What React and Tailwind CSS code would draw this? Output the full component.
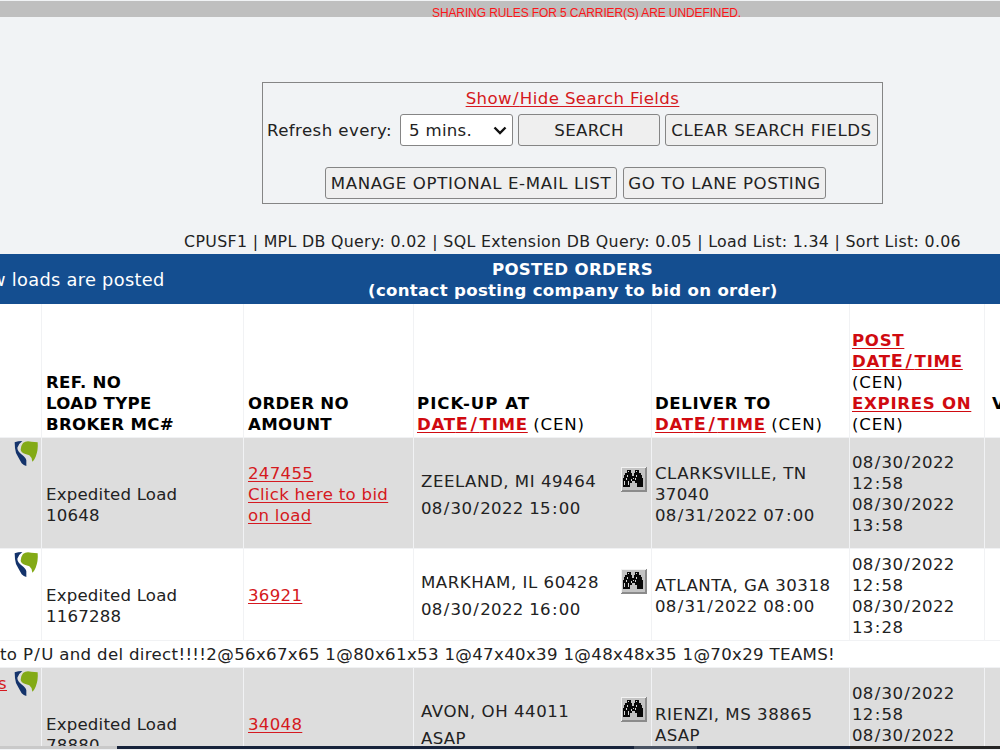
import React from 'react'

const loads = [
  {
    id: '10648',
    height: 'h-[111px]',
    shade: 'bg-[#dddddd]',
    ref: { pad: 'pt-[46px]', lines: ['Expedited Load', '10648'] },
    order: { pad: 'pt-[25px]', lines: ['247455', 'Click here to bid', 'on load'] },
    pickup: { pad: 'pt-[33px]', lines: ['ZEELAND, MI 49464', '08/30/2022 15:00'] },
    icon: 'mt-[29px]',
    deliver: { pad: 'pt-[25px]', lines: ['CLARKSVILLE, TN', '37040', '08/31/2022 07:00'] },
    post: { pad: 'pt-[14px]', lines: ['08/30/2022', '12:58', '08/30/2022', '13:58'] },
  },
  {
    id: '1167288',
    height: 'h-[92px]',
    shade: 'bg-white',
    ref: { pad: 'pt-[36px]', lines: ['Expedited Load', '1167288'] },
    order: { pad: 'pt-[36px]', lines: ['36921'] },
    pickup: { pad: 'pt-[23px]', lines: ['MARKHAM, IL 60428', '08/30/2022 16:00'] },
    icon: 'mt-[20px]',
    deliver: { pad: 'pt-[26px]', lines: ['ATLANTA, GA 30318', '08/31/2022 08:00'] },
    post: { pad: 'pt-[5px]', lines: ['08/30/2022', '12:58', '08/30/2022', '13:28'] },
    note: 'to P/U and del direct!!!!2@56x67x65 1@80x61x53 1@47x40x39 1@48x48x35 1@70x29 TEAMS!',
  },
  {
    id: '78880',
    height: 'h-[79px]',
    shade: 'bg-[#dddddd]',
    tail: 's',
    ref: { pad: 'pt-[46px]', lines: ['Expedited Load', '78880'] },
    order: { pad: 'pt-[46px]', lines: ['34048'] },
    pickup: { pad: 'pt-[33px]', lines: ['AVON, OH 44011', 'ASAP'] },
    icon: 'mt-[29px]',
    deliver: { pad: 'pt-[36px]', lines: ['RIENZI, MS 38865', 'ASAP'] },
    post: { pad: 'pt-[15px]', lines: ['08/30/2022', '12:58', '08/30/2022'] },
  },
]

const columns = 'grid grid-cols-[41px_202px_170px_238px_198px_135px_16px]'

// Slashes and colons get a little more room on both sides
const Spaced = ({ text, wide = 'tracking-[1.3px]' }) =>
  text.split(/(.[/:])/).map((part, i) => (i % 2 ? <span key={i} className={wide}>{part}</span> : part))

const Lines = ({ lines }) =>
  lines.map((line, i) => (
    <div key={i} className={line.includes(',') ? 'tracking-[0.53px]' : ''}>
      <Spaced text={line} />
    </div>
  ))

const Button = ({ children, className }) => (
  <button
    className={`h-8 shrink-0 whitespace-nowrap rounded-[3px] border border-[#858585] bg-[#efefef] text-center ${className}`}
  >
    {children}
  </button>
)

const SortLink = ({ children }) => (
  <a className="font-bold tracking-[0.7px] text-[#d00a10] underline decoration-1 underline-offset-2">
    <Spaced text={children} wide="text-[17.6px] tracking-[2.7px]" />
  </a>
)

const Zone = () => <span className="tracking-[0.8px]">(CEN)</span>

const Shield = () => (
  <svg className="h-[27px] w-[25px] shrink-0" viewBox="42 30 75 81">
    <path d="M44 37Q54 33 67 33Q54 43 52 53Q52 64 66 74Q78 83 79 91L79 108Q71 106 65 100Q56 84 48 69Q44 55 44 37Z" fill="#14336b" />
    <path d="M69 39Q78 31 94 35L113 37Q115 61 107 80Q103 90 97 95Q96 82 88 76L76 72Q63 67 62 59Q61 50 69 39Z" fill="#83aa16" />
  </svg>
)

const Binoculars = () => (
  <svg className="h-[25px] w-[26px]" viewBox="0 0 26 25" shapeRendering="crispEdges">
    <path d="M0 0H26V25H0Z" fill="#8b8b8b" />
    <path d="M0 0H25V1H1V24H0Z" fill="#f2f2f2" />
    <path d="M1 1H24V23H1Z" fill="#c3c3c3" />
    <path
      d="M6 3H10V6H11V9H13V6H14V3H18V6H20V8H21V11H22V20H16V16H14V14H11V16H9V20H2V11H3V8H4V6H6Z"
      fill="#080808"
    />
    <path d="M7 4H8V5H7ZM15 4H16V5H15ZM6 8H7V10H6ZM5 11H6V13H5ZM3 14H4V18H3ZM12 11H13V12H12ZM10 12H11V14H10ZM15 8H16V10H15ZM14 11H15V13H14ZM7 14H8V18H7Z" fill="#d6d6d6" />
  </svg>
)

const Cell = ({ cell, className = 'pl-[3px]' }) => (
  <div className={`border-l border-[#f1f2f4] ${cell.pad} ${className}`}>
    <Lines lines={cell.lines} />
  </div>
)

const LoadRow = ({ load }) => (
  <>
    <div className={`${columns} ${load.height} ${load.shade} overflow-hidden border-t border-[#f1f2f4]`}>
      <div className="flex justify-end pr-[2px] pt-[2px]">
        {load.tail && <a className="mr-[7px] mt-[3px] text-[#d51920] underline">{load.tail}</a>}
        <Shield />
      </div>
      <Cell cell={load.ref} className="pl-[4px] tracking-[0.2px]" />
      <div className={`border-l border-[#f1f2f4] pl-1 text-[#d51920] underline decoration-1 underline-offset-2 ${load.order.pad}`}>
        <Lines lines={load.order.lines} />
      </div>
      <div className="flex justify-between border-l border-[#f1f2f4] pl-[7px] pr-1">
        <div className={`leading-[27px] ${load.pickup.pad} -mt-[3px]`}>
          <Lines lines={load.pickup.lines} />
        </div>
        <div className={load.icon}>
          <Binoculars />
        </div>
      </div>
      <Cell cell={load.deliver} />
      <Cell cell={load.post} className="pl-[2px]" />
      <div className="border-l border-[#f1f2f4]" />
    </div>
    {load.note && (
      <div className="h-[27px] border-t border-[#f1f2f4] bg-white pt-[2.5px] tracking-[0.33px]">
        <Spaced text={load.note} />
      </div>
    )}
  </>
)

const App = () => {
  return (
    <div className="flex h-[750px] w-[1000px] flex-col overflow-hidden whitespace-nowrap bg-[#f1f3f5] font-['DejaVu_Sans',sans-serif] text-[16.6px] leading-[21px] tracking-[0.3px] text-[#222]">
      <div className="mt-px h-4 shrink-0 bg-[#bfbfbf] pl-[432px] pt-[4px] font-['Liberation_Sans',sans-serif] text-[12px] leading-4 tracking-[-0.11px] text-[#fb1518]">
        SHARING RULES FOR 5 CARRIER(S) ARE UNDEFINED.
      </div>

      {/* Search panel */}
      <div className="ml-[262px] mt-[65px] h-[122px] w-[621px] shrink-0 border border-[#858585] pt-[5px]">
        <div className="text-center tracking-[0.4px] text-[#d51920]">
          <a className="underline decoration-1 underline-offset-2">
            <Spaced text="Show/Hide Search Fields" />
          </a>
        </div>
        <div className="mt-[5px] flex items-center pl-1">
          <span className="w-[133px] shrink-0 tracking-[0.42px]">Refresh every:</span>
          <div className="mr-[5px] flex h-8 w-[113px] shrink-0 items-center justify-between rounded-[3px] border border-[#858585] bg-white pl-2 pr-[5px]">
            5 mins.
            <svg className="h-[9px] w-[14px]" viewBox="0 0 14 9">
              <path d="M1.5 1.5L7 7L12.5 1.5" fill="none" stroke="#111" strokeWidth="2.4" />
            </svg>
          </div>
          <Button className="mr-[5px] w-[142px] tracking-[0.4px]">SEARCH</Button>
          <Button className="w-[213px] tracking-[0.58px]">CLEAR SEARCH FIELDS</Button>
        </div>
        <div className="mt-[21px] flex gap-[6px] pl-[62px]">
          <Button className="w-[292px] tracking-[0.63px]">MANAGE OPTIONAL E-MAIL LIST</Button>
          <Button className="w-[203px] tracking-[0.53px]">GO TO LANE POSTING</Button>
        </div>
      </div>

      <div className="mt-[27px] h-[23px] shrink-0 pr-[39px] text-right text-[15.8px] tracking-[0.33px]">
        CPUSF1 | MPL DB Query: 0.02 | SQL Extension DB Query: 0.05 | Load List: 1.34 | Sort List: 0.06
      </div>

      {/* Section title */}
      <div className="flex h-[50px] shrink-0 items-center bg-[#144e90] text-white">
        <div className="flex w-[368px] justify-start text-[17.8px]">
          <span className="-ml-[9px] mt-[1px]">w loads are posted</span>
        </div>
        <div className="w-[409px] pt-[2px] text-center font-bold">
          <div>POSTED ORDERS</div>
          <div>(contact posting company to bid on order)</div>
        </div>
      </div>

      {/* Column headings */}
      <div className={`${columns} h-[133px] shrink-0 bg-white text-black [&>div]:flex [&>div]:flex-col [&>div]:justify-end [&>div]:border-[#f1f2f4] [&>div]:pb-[2px]`}>
        <div />
        <div className="border-l pl-1 font-bold">
          <Lines lines={['REF. NO', 'LOAD TYPE', 'BROKER MC#']} />
        </div>
        <div className="border-l pl-1 font-bold">
          <Lines lines={['ORDER NO', 'AMOUNT']} />
        </div>
        <div className="border-l pl-[3px]">
          <b className="tracking-[1px]">PICK-UP AT</b>
          <p><SortLink>DATE/TIME</SortLink> <Zone /></p>
        </div>
        <div className="border-l pl-[3px]">
          <b className="tracking-[0.6px]">DELIVER TO</b>
          <p><SortLink>DATE/TIME</SortLink> <Zone /></p>
        </div>
        <div className="border-l pl-[2px]">
          <p><SortLink>POST</SortLink></p>
          <p><SortLink>DATE/TIME</SortLink></p>
          <p><Zone /></p>
          <p><SortLink>EXPIRES ON</SortLink></p>
          <p><Zone /></p>
        </div>
        <div className="overflow-hidden border-l pl-[7px] font-bold">
          <Lines lines={['V', '\u00a0']} />
        </div>
      </div>

      {loads.map((load) => (
        <LoadRow key={load.id} load={load} />
      ))}

      <div className="flex h-[3px] shrink-0 bg-[#c9c9c9]">
        <div className="ml-[117px] w-[517px] bg-[#17233b]" />
        <div className="w-[63px] bg-[#485262]" />
        <div className="w-[153px] bg-[#17233b]" />
        <div className="grow bg-[#252525]" />
      </div>
    </div>
  )
}

export default App
